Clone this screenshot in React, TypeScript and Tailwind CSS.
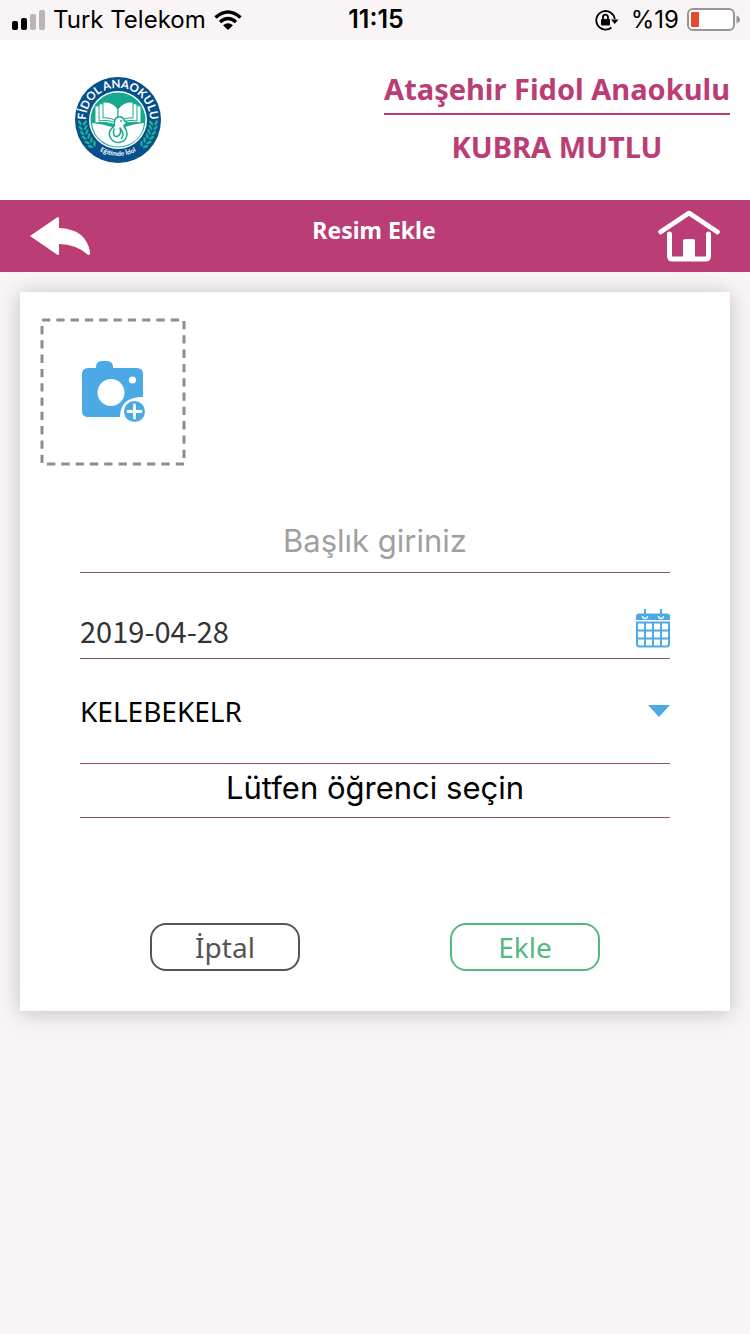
import { useState } from 'react';

const LEAVES = [0, 1, 2, 3, 4, 5];

const SchoolLogo = () => (
  <svg viewBox="0 0 86 86" className="w-[86px] h-[86px]" role="img" aria-label="Fidol Anaokulu">
    <defs>
      <path id="arc-top" d="M 13 54 A 32 32 0 1 1 73 54" />
      <path id="arc-bottom" d="M 11 60 A 36.500 36.500 0 0 0 75 60" />
    </defs>
    <circle cx="43" cy="43" r="43" fill="#07508c" />
    <circle cx="43" cy="43" r="29" fill="#fff" />
    <circle cx="43" cy="43" r="27.5" fill="#17a98e" />
    <g fill="#fff" stroke="#17a98e" strokeWidth="1">
      <path d="M20 29 Q33 27 43 33 Q53 27 66 29 V46 Q53 44 43 49 Q33 44 20 46Z" />
      <path d="M24 27 Q35 25 43 32 V47 Q34 42 24 44Z" />
      <path d="M62 27 Q51 25 43 32 V47 Q52 42 62 44Z" />
      <path d="M28 25 Q37 24 43 32 V46 Q37 40 28 41Z" />
      <path d="M58 25 Q49 24 43 32 V46 Q49 40 58 41Z" />
    </g>
    <path d="M17 46 Q28 47 37 50 L50 50 Q58 47 69 46 Q67 63 52 68 Q43 71 34 68 Q19 62 17 46Z" fill="#fff" />
    <g fill="#fff" stroke="#17a98e" strokeWidth="1.500" strokeLinecap="round" strokeLinejoin="round">
      <path d="M53 46 L49.500 44 Q48 39 43 40 Q38.500 42 39.500 47 Q40 49 37 51 Q33 55 35 60 Q38 66 44 65.500 Q51 64.500 52 58 Q52 53 49 49.500 Q49 47 53 46Z" />
      <path d="M39 52 Q37 60 42 59.500 Q47 58 45 51 Q50 57 46.500 61.500" fill="none" />
    </g>
    <circle cx="46" cy="44" r="0.9" fill="#17a98e" />
    <g fill="#1fae93">
      {LEAVES.map((n) => (
        <g key={n}>
          <g transform={`rotate(${2 + n * -8} 43 43)`}>
            <ellipse cx="5" cy="47" rx="1.3" ry="3" transform="rotate(-35 5 47)" />
            <ellipse cx="10" cy="47" rx="1.3" ry="3" transform="rotate(35 10 47)" />
          </g>
          <g transform={`rotate(${-2 + n * 8} 43 43)`}>
            <ellipse cx="81" cy="47" rx="1.3" ry="3" transform="rotate(35 81 47)" />
            <ellipse cx="76" cy="47" rx="1.3" ry="3" transform="rotate(-35 76 47)" />
          </g>
        </g>
      ))}
    </g>
    <text className="font-['Lato'] font-bold" fontSize="11.500" fill="#fff" textAnchor="middle">
      <textPath href="#arc-top" startOffset="50%">FİDOL ANAOKULU</textPath>
    </text>
    <text className="font-['Lato'] font-bold" fontSize="6.500" fill="#fff" textAnchor="middle">
      <textPath href="#arc-bottom" startOffset="50%">Eğitimde İdol</textPath>
    </text>
  </svg>
);

const StatusBar = () => (
  <div className="grid grid-cols-[1fr_auto_1fr] items-center h-10 pl-3 pr-2.5 font-['Inter',sans-serif] text-2xl text-black">
    <div className="flex items-center gap-2">
      <svg viewBox="0 0 33 20" className="w-[33px] h-5">
        <rect x="0" y="11" width="6" height="9" rx="2" />
        <rect x="9" y="8" width="6" height="12" rx="2" />
        <rect x="18" y="4" width="6" height="16" rx="2" fill="#b9b6b7" />
        <rect x="27" y="0" width="6" height="20" rx="2" fill="#b9b6b7" />
      </svg>
      <span className="whitespace-nowrap">Turk Telekom</span>
      <svg viewBox="0 0 28 20" className="w-7 h-5" fill="none" stroke="#000" strokeWidth="3.6">
        <path d="M1.5 7.5 Q14 -3.5 26.5 7.5" />
        <path d="M6 12 Q14 5 22 12" />
        <path d="M14 20 L9 15.2 Q14 11.4 19 15.2Z" fill="#000" stroke="none" />
      </svg>
    </div>
    <span className="font-semibold text-[25px]">11:15</span>
    <div className="flex items-center justify-end gap-2">
      <svg viewBox="0 0 24 22" className="w-6 h-[22px] mr-1" fill="none" stroke="#000" strokeWidth="1.8">
        <path d="M16.5 18.5 A9.3 9.3 0 1 1 19.8 10" />
        <path d="M16 10.5 H23.5 L19.8 15Z" fill="#000" stroke="none" />
        <rect x="6" y="10" width="9" height="6.5" rx="1" fill="#000" stroke="none" />
        <path d="M8 10.5 V8.2 A2.5 2.5 0 0 1 13 8.2 V10.5" />
      </svg>
      <span>%19</span>
      <svg viewBox="0 0 53 24" className="w-[53px] h-6">
        <rect x="1" y="1" width="46" height="21" rx="5" fill="#fff" stroke="#989596" strokeWidth="2" />
        <rect x="4" y="4" width="8" height="15" rx="1" fill="#e8482f" />
        <path d="M49.5 7.5 Q53 9 53 11.5 Q53 14 49.5 15.5Z" fill="#989596" />
      </svg>
    </div>
  </div>
);

const BackIcon = () => (
  <svg viewBox="0 0 60 39" className="w-[60px] h-[39px]" fill="#fff">
    <path d="M0 19 L27 0.5 Q29 -0.5 29 1.5 V11 Q56 12 60 35 Q60.500 39 57.500 37.500 Q46 27 29 27 V36.500 Q29 39 27 37.500Z" />
  </svg>
);

const HomeIcon = () => (
  <svg viewBox="0 0 62 52" className="w-[62px] h-[52px]" fill="none" stroke="#fff" strokeLinecap="round" strokeLinejoin="round">
    <path d="M2.500 22 L31 3 L59.500 22" strokeWidth="4.600" />
    <path d="M11.500 24 V46 Q11.500 49 14.500 49 H47.500 Q50.500 49 50.500 46 V24" strokeWidth="5" />
    <path d="M25 49 V31 Q25 29 27 29 H35 Q37 29 37 31 V49Z" fill="#fff" stroke="none" />
  </svg>
);

const AddPhotoIcon = () => (
  <svg viewBox="0 0 146 148" className="w-[146px] h-[148px]">
    <rect x="2" y="2" width="142" height="144" fill="none" stroke="#8d8d8d" strokeWidth="3" strokeDasharray="8.300 6" />
    <g fill="#4ba9e6">
      <path d="M48 50 H56 V48 Q57 43 62 43 H66 Q72 43 73 48 V50 H97 Q103 50 103 56 V93 Q103 99 97 99 H48 Q42 99 42 93 V56 Q42 50 48 50Z" />
      <path d="M80 99 Q80 79 103 79 H110 V108 H80Z" fill="#fff" />
      <circle cx="71" cy="74.500" r="13.500" fill="#fff" />
      <circle cx="92.500" cy="62" r="3.600" fill="#fff" />
      <circle cx="94.500" cy="93.500" r="10.500" />
    </g>
    <path d="M94.500 87 V100 M88 93.500 H101" stroke="#fff" strokeWidth="2.800" strokeLinecap="round" />
  </svg>
);

const CalendarIcon = () => (
  <svg viewBox="0 0 34 39" className="w-[34px] h-[39px]" fill="none" stroke="#4ba9e6">
    <path d="M0 11 V7 Q0 4.500 3 4.500 H31 Q34 4.500 34 7 V11Z" fill="#4ba9e6" stroke="none" />
    <g stroke="#fff" strokeWidth="1.300">
      <path d="M6.500 7 Q6.500 9.500 9 9.500 Q11.500 9.500 11.500 7" />
      <path d="M22.500 7 Q22.500 9.500 25 9.500 Q27.500 9.500 27.500 7" />
    </g>
    <path d="M9 0 V8 M25 0 V8" strokeWidth="2" />
    <path d="M1 13.500 H33 V35 Q33 37.500 30.500 37.500 H3.500 Q1 37.500 1 35Z" strokeWidth="2" />
    <path d="M9 13 V37 M17 13 V37 M25 13 V37 M1 21.500 H33 M1 29.500 H33" strokeWidth="2" />
  </svg>
);

const App = () => {
  const [title, setTitle] = useState('');
  const [date, setDate] = useState('2019-04-28');

  return (
    <div className="min-h-screen bg-[#f9f5f6] font-['Noto_Sans',sans-serif]">
      <StatusBar />

      <header className="flex items-center justify-between h-40 pl-[75px] pr-5 bg-white">
        <SchoolLogo />
        <div className="pb-1 text-center text-[29px] leading-10 font-bold text-[#bb3d75]">
          <h1 className="pb-1 border-b-2 border-[#bb3d75]">Ataşehir Fidol Anaokulu</h1>
          <p className="pt-3">KUBRA MUTLU</p>
        </div>
      </header>

      <nav className="flex items-center justify-between h-[72px] px-[30px] bg-[#bb3d75]">
        <button type="button" aria-label="Geri"><BackIcon /></button>
        <h2 className="pb-3 text-[23px] font-bold text-white">Resim Ekle</h2>
        <button type="button" aria-label="Ana sayfa"><HomeIcon /></button>
      </nav>

      <main className="p-5">
        <form
          onSubmit={(e) => e.preventDefault()}
          className="px-[60px] pt-[26px] pb-10 bg-white shadow-[0_2px_20px_rgba(0,0,0,0.22)]"
        >
          <button type="button" aria-label="Resim seç" className="block -ml-10">
            <AddPhotoIcon />
          </button>

          <input
            type="text"
            aria-label="Başlık"
            placeholder="Başlık giriniz"
            value={title}
            onChange={(e) => setTitle(e.target.value)}
            className="block w-full h-16 mt-[43px] border-b border-[#924a70] text-center font-['Inter',sans-serif] text-[31px] text-black placeholder:text-[#a0a0a0] outline-none"
          />

          <div className="flex items-end h-[86px] pb-[10px] border-b border-[#924a70]">
            <input
              type="text"
              aria-label="Tarih"
              value={date}
              onChange={(e) => setDate(e.target.value)}
              className="flex-1 min-w-0 h-9 font-['Noto_Sans_CJK_SC',sans-serif] text-[29px] leading-9 text-[#333] outline-none"
            />
            <button type="button" aria-label="Takvim"><CalendarIcon /></button>
          </div>

          <div className="flex items-center h-[105px] border-b border-[#924a70]">
            <select aria-label="Sınıf" className="flex-1 h-10 text-[28px] leading-10 text-black appearance-none outline-none">
              <option>KELEBEKELR</option>
            </select>
            <svg viewBox="0 0 22 12" className="w-[22px] h-3" fill="#4ba9e6">
              <path d="M0 0 H22 L11 12Z" />
            </svg>
          </div>

          <button
            type="button"
            className="block w-full h-[54px] pb-1 border-b border-[#924a70] text-center font-['Inter',sans-serif] text-[31px] text-black"
          >
            Lütfen öğrenci seçin
          </button>

          <div className="flex justify-between mt-[105px] px-[70px] text-[28px] leading-10">
            <button type="button" className="w-[150px] h-12 border-2 border-[#555] rounded-2xl text-[#555]">
              İptal
            </button>
            <button type="submit" className="w-[150px] h-12 border-2 border-[#55b97f] rounded-2xl text-[#55b97f]">
              Ekle
            </button>
          </div>
        </form>
      </main>
    </div>
  );
};

export default App;
